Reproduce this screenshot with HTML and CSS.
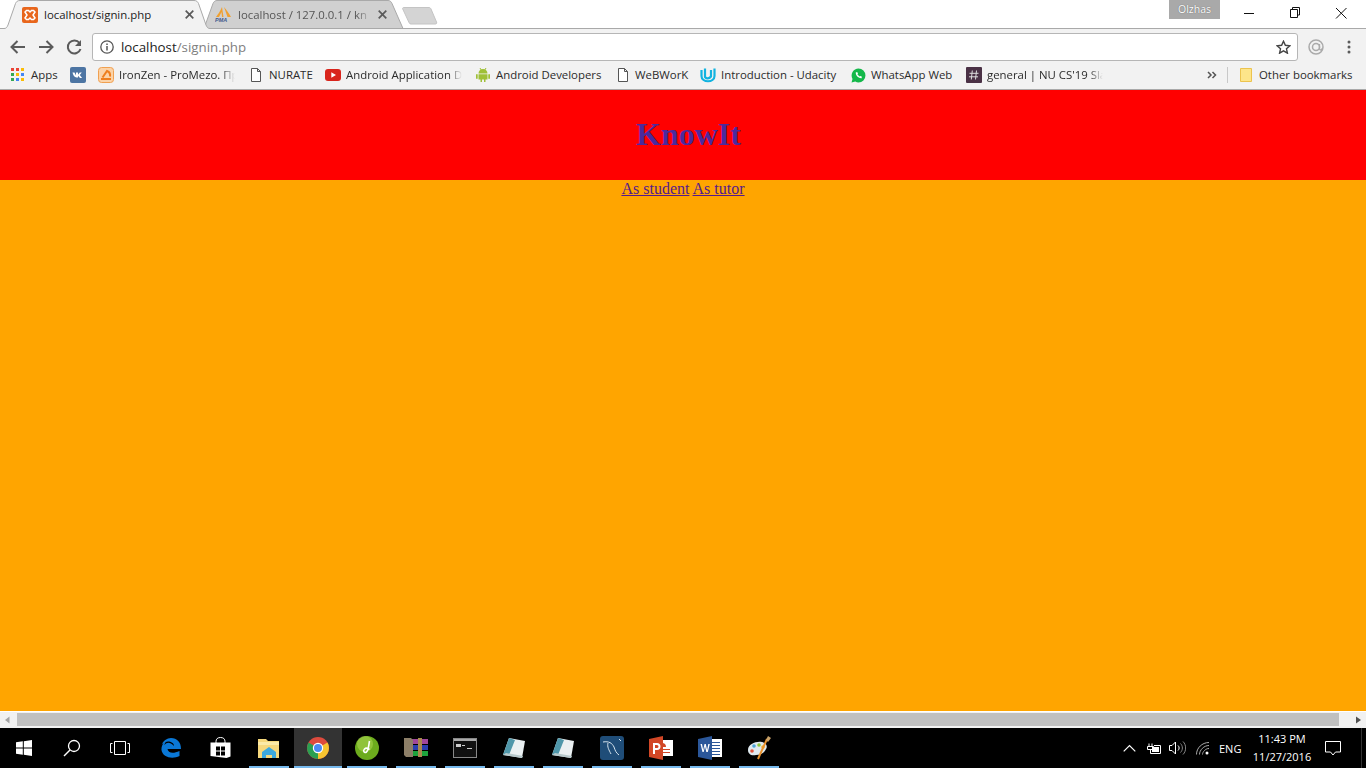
FILE: index.html
```html
<!DOCTYPE html>
<html lang="en">
<head>
<meta charset="utf-8">
<title>localhost/signin.php</title>
<link rel="stylesheet" href="styles.css">
</head>
<body>
<div class="screen">
  <div class="chrome">
    <div class="tabstrip">
      <div class="tab tab-active">
        <svg class="tab-shape" width="210" height="29" viewBox="0 0 210 29"><path d="M0 28.500H4C6 28.500 7 27.500 8 25L15.500 3.500C16.500 1.500 17.500 .5 20 .5H194C196.500 .5 197.500 1.500 198.500 3.500L206 25C207 27.500 208 28.500 210 28.500V29H0Z" fill="#f2f2f2"/><path d="M0 28.500H4C6 28.500 7 27.500 8 25L15.500 3.500C16.500 1.500 17.500 .5 20 .5H194C196.500 .5 197.500 1.500 198.500 3.500L206 25C207 27.500 208 28.500 210 28.500" fill="none" stroke="#a9a9a9"/></svg>
        <svg class="favicon" width="16" height="16" viewBox="0 0 16 16"><rect width="16" height="16" rx="2" fill="#e8661c"/><path d="M4.500 3.500h2L8 5l1.500-1.500h2l1.500 1.500L11 8l2 3-1.500 1.500h-2L8 11l-1.500 1.500h-2L3 11l2-3-2-3Z" fill="none" stroke="#fff" stroke-width="1.500"/></svg>
        <span class="tab-title">localhost/signin.php</span>
        <svg class="tab-x" width="9" height="9" viewBox="0 0 9 9"><path d="M.7.7l7.600 7.600M8.300.7L.7 8.300" stroke="#5a5a5a" stroke-width="1.700"/></svg>
      </div>
      <div class="tab tab-back">
        <svg class="tab-shape" width="200" height="29" viewBox="0 0 200 29"><path d="M0 28.500L9 3.500C10 1.500 11 .5 13 .5H184C186 .5 187 1.500 188 3.500L199 28.500Z" fill="#d0d0d0" stroke="#a9a9a9"/></svg>
        <svg class="favicon favicon-pma" width="17" height="15" viewBox="0 0 17 15"><path d="M1 10C3 7 5.500 4 7 0l1.500 10H7L6.500 5 4 10ZM9 0c2.500 3 5 6 7 10h-3.500Z" fill="#f0a030"/><text x="0" y="14.500" class="pma">PMA</text></svg>
        <span class="tab-title tab-title-back">localhost / 127.0.0.1 / kn</span>
        <svg class="tab-x" width="9" height="9" viewBox="0 0 9 9"><path d="M.7.7l7.600 7.600M8.300.7L.7 8.300" stroke="#5a5a5a" stroke-width="1.700"/></svg>
      </div>
      <svg class="new-tab" width="36" height="18" viewBox="0 0 36 18"><path d="M.5 1.500C.5 1 1 .5 2 .5H27C28 .5 28.500 1 29 2L34.500 15C35 16.500 34.500 17 33 17H9C8 17 7.500 16.500 7 15.500Z" fill="#d4d4d4" stroke="#c4c4c4"/></svg>
      <div class="spacer"></div>
      <div class="profile">Olzhas</div>
      <div class="winctl">
        <svg width="46" height="28" viewBox="0 0 46 28"><path d="M18 13.500H28" stroke="#111"/></svg>
        <svg width="46" height="28" viewBox="0 0 46 28"><path d="M18.500 9.500h7v8h-7ZM20.500 9.500v-2h7v7.500h-2" fill="none" stroke="#111"/></svg>
        <svg width="46" height="28" viewBox="0 0 46 28"><path d="M18 8l10.500 10.500M28.500 8L18 18.500" stroke="#111"/></svg>
      </div>
    </div>
    <div class="toolbar">
      <svg class="nav" width="28" height="20" viewBox="0 0 28 20"><path d="M18 10H5M10.500 4L4.500 10l6 6" fill="none" stroke="#5b5b5b" stroke-width="2"/></svg>
      <svg class="nav" width="28" height="20" viewBox="0 0 28 20"><path d="M4 10h13M11.500 4l6 6-6 6" fill="none" stroke="#5b5b5b" stroke-width="2"/></svg>
      <svg class="nav" width="28" height="20" viewBox="0 0 28 20"><path d="M16.500 6A6.500 6.500 0 1 0 17.500 12" fill="none" stroke="#5b5b5b" stroke-width="2"/><path d="M18 3v6h-6Z" fill="#5b5b5b"/></svg>
      <div class="omnibox">
        <svg width="14" height="14" viewBox="0 0 14 14"><circle cx="7" cy="7" r="6.200" fill="none" stroke="#555" stroke-width="1.300"/><path d="M7 6v4.500M7 3.500v1.500" stroke="#555" stroke-width="1.500"/></svg>
        <span class="url"><span class="url-host">localhost</span>/signin.php</span>
        <svg class="star" width="15" height="14" viewBox="0 0 16 15"><path d="M8 1.300l2 4.400 4.800.5-3.600 3.200 1 4.700L8 11.700l-4.200 2.400 1-4.700L1.200 6.200 6 5.700Z" fill="none" stroke="#444" stroke-width="1.500"/></svg>
      </div>
      <svg class="ext" width="16" height="16" viewBox="0 0 16 16"><circle cx="8" cy="8" r="7" fill="none" stroke="#aaa" stroke-width="1.500"/><circle cx="8" cy="8" r="3.500" fill="none" stroke="#aaa" stroke-width="1.500"/><path d="M11.500 5v4.500c0 2 2 2 2.500 0" fill="none" stroke="#aaa" stroke-width="1.300"/></svg>
      <svg class="menu" width="4" height="14" viewBox="0 0 4 14"><circle cx="2" cy="2" r="1.500" fill="#5b5b5b"/><circle cx="2" cy="7" r="1.500" fill="#5b5b5b"/><circle cx="2" cy="12" r="1.500" fill="#5b5b5b"/></svg>
    </div>
    <div class="bookmarks">
      <div class="bm bm-apps">
        <svg width="14" height="14" viewBox="0 0 14 14"><rect x="0" y="0" width="3" height="3" fill="#ea4335"/><rect x="5" y="0" width="3" height="3" fill="#ea4335"/><rect x="10" y="0" width="3" height="3" fill="#fbbc05"/><rect x="0" y="5" width="3" height="3" fill="#34a853"/><rect x="5" y="5" width="3" height="3" fill="#fbbc05"/><rect x="10" y="5" width="3" height="3" fill="#4285f4"/><rect x="0" y="10" width="3" height="3" fill="#34a853"/><rect x="5" y="10" width="3" height="3" fill="#4285f4"/><rect x="10" y="10" width="3" height="3" fill="#fbbc05"/></svg>
        <span>Apps</span>
      </div>
      <div class="bm bm-vk">
        <svg width="16" height="16" viewBox="0 0 16 16"><rect width="16" height="16" rx="2" fill="#4d75a3"/><path d="M2.500 5.500h2l1.500 3v-3h2v2.300l1.800-2.300h2l-2 2.500 2.300 3H10L8 8.800v1.700H6.500C4.500 10.500 3 8 2.500 5.500Z" fill="#fff"/></svg>
      </div>
      <div class="bm bm-iron">
        <svg width="16" height="16" viewBox="0 0 16 16"><rect x=".5" y=".5" width="15" height="15" rx="3" fill="#fbd3a8" stroke="#f0a050"/><path d="M3 12h10M4.500 10.500L9 4c2.500 1 3.500 3 3 5.500" fill="none" stroke="#ee7f1e" stroke-width="2"/></svg>
        <span class="fade">IronZen - ProMezo. Пр</span>
      </div>
      <div class="bm bm-nurate">
        <svg class="doc" width="12" height="14" viewBox="0 0 12 14"><path d="M1.500.5h6l3 3v10h-9ZM7.500.5v3h3" fill="#fff" stroke="#555"/></svg>
        <span>NURATE</span>
      </div>
      <div class="bm bm-yt">
        <svg width="16" height="12" viewBox="0 0 16 12"><rect width="16" height="12" rx="3" fill="#d9251c"/><path d="M6.300 3.300v5.400L11 6Z" fill="#fff"/></svg>
        <span class="fade">Android Application D</span>
      </div>
      <div class="bm bm-droid">
        <svg width="16" height="16" viewBox="0 0 16 16"><path d="M3.500 6.500a4.500 4.500 0 0 1 9 0ZM3.500 7.200h9v5.300H10.500V15H9v-2.500H7V15H5.500v-2.500h-2ZM1 7.200h1.700v4.500H1ZM13.300 7.200H15v4.500h-1.700Z" fill="#9fc037"/><path d="M5 1l1.200 2M11 1L9.800 3" stroke="#9fc037"/></svg>
        <span>Android Developers</span>
      </div>
      <div class="bm bm-web">
        <svg class="doc" width="12" height="14" viewBox="0 0 12 14"><path d="M1.500.5h6l3 3v10h-9ZM7.500.5v3h3" fill="#fff" stroke="#555"/></svg>
        <span>WeBWorK</span>
      </div>
      <div class="bm bm-uda">
        <svg width="16" height="16" viewBox="0 0 16 16"><path d="M1.500 3v6c0 7 13 7 13 0V1.500M5 1.500V10c1.500 2 4 2 6-.5V3" fill="none" stroke="#11b3e0" stroke-width="2.200"/></svg>
        <span>Introduction - Udacity</span>
      </div>
      <div class="bm bm-wa">
        <svg width="15" height="15" viewBox="0 0 14 14"><path d="M7 .5a6.500 6.500 0 0 1 0 13 6.500 6.500 0 0 1-3-.8L.5 13.500l.9-3.300A6.500 6.500 0 0 1 7 .5Z" fill="#14b84a"/><path d="M4.500 4C4 6.500 7 10 10 9.500L10 8 8.500 7.500 8 8 6 6l.5-.7L6 4Z" fill="#fff"/></svg>
        <span>WhatsApp Web</span>
      </div>
      <div class="bm bm-slack">
        <svg width="16" height="16" viewBox="0 0 16 16"><rect width="16" height="16" rx="1" fill="#4a3145"/><path d="M6.300 3.500L5.300 12.500M10.500 3.500L9.500 12.500M3.500 6.300h9M3 9.800h9" stroke="#ddd"/></svg>
        <span class="fade">general | NU CS'19 Sla</span>
      </div>
      <div class="spacer"></div>
      <svg class="chev" width="10" height="8" viewBox="0 0 10 8"><path d="M1 1l3 3-3 3M5.500 1l3 3-3 3" fill="none" stroke="#555" stroke-width="1.500"/></svg>
      <div class="bm-sep"></div>
      <div class="bm bm-other">
        <svg width="12" height="14" viewBox="0 0 12 14"><path d="M.5.500h11v13H.5Z" fill="#fde58a" stroke="#ecc34e"/></svg>
        <span>Other bookmarks</span>
      </div>
    </div>
  </div>

  <main class="page">
    <header class="banner"><h1 class="brand">KnowIt</h1></header>
    <div class="links"><a class="link" href="#student">As student</a> <a class="link" href="#tutor">As tutor</a></div>
  </main>

  <div class="hscroll">
    <svg class="sb-arrow" width="17" height="16" viewBox="0 0 17 16"><path d="M9.500 4.500v7L5 8Z" fill="#a3a3a3"/></svg>
    <div class="sb-thumb"></div>
    <svg class="sb-arrow" width="17" height="16" viewBox="0 0 17 16"><path d="M7 4.500v7L12 8Z" fill="#505050"/></svg>
  </div>

  <footer class="taskbar">
    <div class="tb">
      <svg width="16" height="16" viewBox="0 0 16 16"><path d="M0 2.300L6.800 1.300V7.500H0ZM7.800 1.200L16 0V7.500H7.800ZM0 8.500H6.800V14.700L0 13.700ZM7.800 8.500H16V16L7.800 14.800Z" fill="#fff"/></svg>
    </div>
    <div class="tb">
      <svg width="18" height="18" viewBox="0 0 18 18"><circle cx="11" cy="7" r="5.500" fill="none" stroke="#fff" stroke-width="1.300"/><path d="M7 11l-6 6" stroke="#fff" stroke-width="1.500"/></svg>
    </div>
    <div class="tb">
      <svg width="20" height="14" viewBox="0 0 20 14"><path d="M4.500.5h11v13h-11ZM2.500 2.500H.5v9h2M17.500 2.500h2v9h-2" fill="none" stroke="#fff"/></svg>
    </div>
    <div class="tb tb-edge">
      <svg width="20" height="20" viewBox="0 0 20 20"><path d="M10 0c6 0 10 4 10 11H6.500c.5 4 5.500 5 12 2v5c-7 3.500-17 1.500-18-6C0 6 5 2 7 2 4 4 3.500 6 3.500 7 6 4 9 4 13 8 13 5 10 3.500 7 3.500 4 4 0 6 .5 7 2 3 6 0 10 0Z" fill="#0a78d7"/></svg>
    </div>
    <div class="tb">
      <svg width="21" height="22" viewBox="0 0 20 22"><path d="M5.500 6V4.500C5.500 2 7 .5 10 .5s4.500 1.500 4.500 4V6" fill="none" stroke="#fff"/><path d="M0 5.500h20v14L16 21 0 19Z" fill="#fff"/><path d="M5.500 9.500h4v4h-4ZM10.500 9.500h4v4h-4ZM5.500 14.500h4v4h-4ZM10.500 14.500h4v4h-4Z" fill="#000"/></svg>
    </div>
    <div class="tb on">
      <svg width="22" height="20" viewBox="0 0 22 20"><path d="M0 1h8l2 2h11v17H0Z" fill="#f6d87c"/><path d="M0 4h21v3H0Z" fill="#fbeaa7"/><path d="M4 14l7-5 7 5v6h-4v-3H8v3H4Z" fill="#3da9de"/></svg>
    </div>
    <div class="tb on active">
      <svg width="22" height="22" viewBox="0 0 22 22"><circle cx="11" cy="11" r="11" fill="#dd4b3e"/><path d="M11 11L20.500 5.500A11 11 0 0 1 11 22Z" fill="#f6c430"/><path d="M11 11L11 22A11 11 0 0 1 1.500 5.500Z" fill="#2a9f52"/><circle cx="11" cy="11" r="5.200" fill="#fff"/><circle cx="11" cy="11" r="4" fill="#4a8af4"/></svg>
    </div>
    <div class="tb on">
      <svg width="24" height="24" viewBox="0 0 24 24"><circle cx="12" cy="12" r="12" fill="#6cab1d"/><circle cx="10" cy="8" r="8" fill="#a9d44e" opacity=".6"/><path d="M14.500 5c-1 5-1 9-3 11-2 1.500-4-1-2-3 1-1 3-1 5 .5" fill="none" stroke="#fff" stroke-width="1.600"/></svg>
    </div>
    <div class="tb on">
      <svg width="24" height="20" viewBox="0 0 24 20"><path d="M2 1h22v5H2Z" fill="#a0479a"/><path d="M2 7h22v5H2Z" fill="#2a3fb0"/><path d="M2 13h22v5H2Z" fill="#1da33c"/><path d="M0 0h7l2 2v17H2L0 17Z" fill="#8d7f68"/><path d="M14 0h4v19h-4Z" fill="#a98a4e"/></svg>
    </div>
    <div class="tb on">
      <svg width="24" height="20" viewBox="0 0 24 20"><rect x=".5" y=".5" width="23" height="19" fill="#111" stroke="#888"/><path d="M1 1h22v2H1Z" fill="#aaa"/><path d="M3 6h5v3H3ZM9 7h3v1H9ZM14 10h5v1h-5Z" fill="#ccc"/></svg>
    </div>
    <div class="tb on">
      <svg width="24" height="23" viewBox="0 0 24 23"><path d="M7 1l16 3-3 17L1 18Z" fill="#eaf0f2"/><path d="M7 1l6 2-6 15-6 0Z" fill="#4f97aa"/><path d="M1 18l19 3 1-2L4 16Z" fill="#b7c9cc"/></svg>
    </div>
    <div class="tb on">
      <svg width="24" height="23" viewBox="0 0 24 23"><path d="M7 1l16 3-3 17L1 18Z" fill="#eaf0f2"/><path d="M7 1l6 2-6 15-6 0Z" fill="#4f97aa"/><path d="M1 18l19 3 1-2L4 16Z" fill="#b7c9cc"/></svg>
    </div>
    <div class="tb on">
      <svg width="24" height="24" viewBox="0 0 24 24"><rect width="24" height="24" rx="3" fill="#1f4d78"/><path d="M3 6c6-1 9 1 11 5 1 3 2 6 5 8M8 7c-1 4 1 7 3 11M19 3l2 2" fill="none" stroke="#d6e4ee"/></svg>
    </div>
    <div class="tb on">
      <svg width="24" height="24" viewBox="0 0 24 24"><path d="M10 4h14v16H10Z" fill="#fff"/><path d="M13 7a4 4 0 0 1 4 4h-4ZM13 13h8v1h-8ZM13 16h8v1h-8Z" fill="#d24726"/><path d="M0 3L14 0V24L0 21Z" fill="#d24726"/><path d="M4 7h4a3 3 0 0 1 0 7H6v4H4ZM6 9v3h2a1.500 1.500 0 0 0 0-3Z" fill="#fff" fill-rule="evenodd"/></svg>
    </div>
    <div class="tb on">
      <svg width="24" height="24" viewBox="0 0 24 24"><path d="M10 3h14v18H10Z" fill="#fff"/><path d="M13 6h9v1h-9ZM13 9h9v1h-9ZM13 12h9v1h-9ZM13 15h9v1h-9ZM13 18h9v1h-9Z" fill="#2b579a"/><path d="M0 3L14 0V24L0 21Z" fill="#2b579a"/><path d="M2.500 8h1.500l1.200 6 1.300-6h1.300l1.300 6 1.200-6h1.500l-2 8H8.300L7 10.500 5.700 16H4.500Z" fill="#fff"/></svg>
    </div>
    <div class="tb on">
      <svg width="24" height="24" viewBox="0 0 24 24"><path d="M1 14c0-6 8-9 14-8 4 1 6 4 4 7-2 4-5 6-10 6-5 1-8-1-8-5Z" fill="#dfe9ef"/><circle cx="7" cy="10" r="1.800" fill="#4ba3d8"/><circle cx="12" cy="9" r="1.800" fill="#8cc63f"/><circle cx="16" cy="11" r="1.800" fill="#f5b52e"/><circle cx="5" cy="15" r="1.800" fill="#e0533d"/><path d="M11 23L20 3" stroke="#e8912d" stroke-width="2"/><path d="M19 4l2-4 3 2-3 4Z" fill="#c9a26a"/></svg>
    </div>
    <div class="spacer"></div>
    <div class="tray">
      <svg width="13" height="8" viewBox="0 0 13 8"><path d="M.7 7.300L6.500 1.500l5.800 5.800" fill="none" stroke="#fff" stroke-width="1.200"/></svg>
      <svg class="tray-batt" width="17" height="11" viewBox="0 0 17 11"><path d="M4 .5v3M7 .5v3M2.500 3.500h6v3h-6ZM5.500 6.500v4h10v-8H9" fill="none" stroke="#fff"/><path d="M7 4h7v5H7Z" fill="#fff"/></svg>
      <svg class="tray-vol" width="17" height="14" viewBox="0 0 17 14"><path d="M.5 4.500h2.500L6.500 1v12L3 9.500H.5Z" fill="none" stroke="#fff"/><path d="M9 4.500c1.500 1.500 1.500 3.500 0 5" fill="none" stroke="#fff"/><path d="M11.500 2.500c2.500 2.500 2.500 6.500 0 9M14 .5c3.500 3.500 3.500 9.500 0 13" fill="none" stroke="#888"/></svg>
      <svg class="tray-wifi" width="15" height="13" viewBox="0 0 15 13"><path d="M.5 12.500C.5 6 6 .5 13 .5M3.500 12.500C3.500 8 8 3.500 13 3.500M6.500 12.500C6.500 10 9.500 6.500 13 6.500" fill="none" stroke="#aaa"/><circle cx="11" cy="11" r="1.500" fill="#fff"/></svg>
      <span class="tray-lang">ENG</span>
      <div class="clock"><span>11:43 PM</span><span>11/27/2016</span></div>
      <svg class="tray-note" width="16" height="15" viewBox="0 0 16 15"><path d="M.5.500h15v10.500h-5l-2.500 3-2.500-3h-5Z" fill="none" stroke="#fff"/></svg>
      <div class="tray-end"></div>
    </div>
  </footer>
</div>
</body>
</html>
```

FILE: styles.css
```css
* { box-sizing: border-box; }
html, body { margin: 0; padding: 0; height: 100%; overflow: hidden; }
body { font-family: "Liberation Serif", "Times New Roman", serif; }
svg { display: block; flex: none; }
.screen { display: flex; flex-direction: column; width: 1366px; height: 768px; overflow: hidden; }
.spacer { flex: 1; }

.chrome { flex: none; font-family: "Open Sans", "Noto Sans", sans-serif; font-size: 11.400px; color: #333; background: #f2f2f2; }
.tabstrip { position: relative; display: flex; height: 29px; background: #fff; border-bottom: 1px solid #a9a9a9; }
.tab { position: relative; display: flex; align-items: center; height: 29px; flex: none; }
.tab-shape { position: absolute; left: 0; top: 0; }
.tab > .favicon, .tab > .tab-title, .tab > .tab-x { position: relative; }
.tab-active { width: 204px; padding-left: 22px; z-index: 2; }
.tab-back { width: 198px; padding-left: 11px; color: #555; }
.tab-title { display: block; margin-left: 6px; white-space: nowrap; overflow: hidden; }
.tab-active .tab-title { width: 136px; color: #222; }
.tab-title-back { width: 134px; -webkit-mask-image: linear-gradient(90deg, #000 88%, transparent); mask-image: linear-gradient(90deg, #000 88%, transparent); }
.tab-active .tab-x { margin-left: 5px; }
.tab-back .tab-x { margin-left: 6px; }
.pma { font: italic bold 5.500px "Liberation Sans", sans-serif; fill: #445a8c; }
.new-tab { margin-top: 7px; }
.profile { align-self: flex-start; width: 51px; height: 19px; background: #a9a9a9; color: #fff; font-size: 10.500px; line-height: 18px; text-align: center; text-shadow: 0 0 1px #555; margin-right: 6px; }
.winctl { display: flex; margin-right: 2px; }

.toolbar { display: flex; align-items: center; height: 33px; padding: 3px 0 0 7px; background: #f2f2f2; }
.omnibox { display: flex; align-items: center; width: 1206px; height: 28px; margin-left: 1px; padding: 0 6px 0 7px; background: #fff; border: 1px solid #b6b6b6; border-radius: 3px; font-size: 13.300px; }
.url { margin-left: 7px; color: #808080; flex: 1; }
.url-host { color: #222; }
.ext { margin-left: 10px; }
.menu { margin-left: 23px; }

.bookmarks { display: flex; align-items: center; height: 28px; padding: 0 0 1px 11px; background: #f2f2f2; border-bottom: 1px solid #a9a9a9; }
.bm { display: flex; align-items: center; flex: none; color: #2b2b2b; white-space: nowrap; }
.bm span { margin-left: 5px; margin-bottom: 1px; }
.fade { display: block; width: 116px; overflow: hidden; -webkit-mask-image: linear-gradient(90deg, #000 88%, transparent); mask-image: linear-gradient(90deg, #000 88%, transparent); }
.bm-apps { width: 59px; }
.bm-apps span { margin-left: 6px; }
.bm-vk { width: 28px; }
.bm-iron { width: 152px; }
.bm-nurate { width: 75px; }
.bm-nurate span { margin-left: 7px; }
.bm-yt { width: 150px; }
.bm-droid { width: 142px; }
.bm-web { width: 83px; }
.bm-web span { margin-left: 6px; }
.bm-uda { width: 151px; }
.bm-wa { width: 115px; }
.bm-slack { width: 137px; }
.bm-sep { width: 1px; height: 16px; margin-left: 10px; background: #c8c8c8; }
.bm-other { width: 126px; margin-left: 12px; }
.bm-other span { margin-left: 7px; }

.page { flex: 1; min-height: 0; background: #ffa500; color: #000; font-size: 16px; text-align: center; }
.banner { display: flex; align-items: center; justify-content: center; height: 90px; padding: 0 0 2px 11px; background: #f00; }
.brand { margin: 0; font-size: 32px; font-weight: bold; color: #4b2a9e; }
.links { line-height: 18px; }
.link { color: #551a8b; text-decoration: underline; }

.hscroll { display: flex; flex: none; height: 17px; background: #f1f1f1; border-top: 1px solid #fff; }
.sb-thumb { flex: 1; background: #c0c0c0; height: 13px; margin: 1px 10px 0 0; }

.taskbar { display: flex; align-items: stretch; flex: none; height: 40px; background: #000; color: #fff; font-family: "Open Sans", "Noto Sans", sans-serif; font-size: 11px; }
.tb { position: relative; display: flex; align-items: center; justify-content: center; flex: none; width: 48px; }
.tb-edge { margin-left: 3px; }
.tb-edge, .tb-edge ~ .tb { margin-right: 1px; }
.tb.on::after { content: ""; position: absolute; left: 4px; right: 4px; bottom: 0; height: 2px; background: #76b9ed; }
.tb.active { background: #333; }
.tb.active::after { left: 0; right: 0; }

.tray { display: flex; align-items: center; }
.tray-batt { margin-left: 9px; }
.tray-vol { margin-left: 7px; }
.tray-wifi { margin-left: 10px; }
.tray-lang { width: 24px; margin-left: 8px; }
.clock { display: flex; flex-direction: column; align-items: center; width: 58px; margin-left: 10px; line-height: 18px; }
.tray-note { margin-left: 14px; }
.tray-end { width: 1px; height: 100%; background: #333; margin: 0 4px 0 20px; }
```
